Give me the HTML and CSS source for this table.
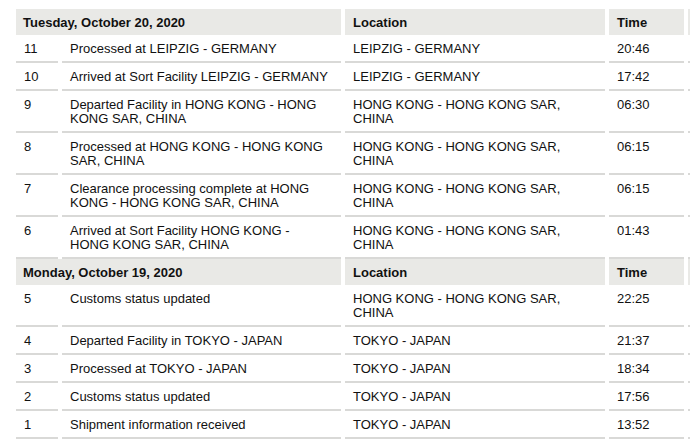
FILE: index.html
```html
<!DOCTYPE html>
<html lang="en">
<head>
<meta charset="utf-8">
<title>Shipment tracking</title>
<link rel="stylesheet" href="styles.css">
</head>
<body>
<div class="frame">
<table class="track">
  <colgroup>
    <col class="c-num"><col class="c-desc"><col class="c-loc"><col class="c-time"><col class="c-extra">
  </colgroup>
  <tbody>
    <tr class="day">
      <th colspan="2">Tuesday, October 20, 2020</th>
      <th>Location</th>
      <th>Time</th>
      <th></th>
    </tr>
    <tr><td>11</td><td>Processed at LEIPZIG - GERMANY</td><td>LEIPZIG - GERMANY</td><td>20:46</td><td></td></tr>
    <tr><td>10</td><td>Arrived at Sort Facility LEIPZIG - GERMANY</td><td>LEIPZIG - GERMANY</td><td>17:42</td><td></td></tr>
    <tr><td>9</td><td>Departed Facility in HONG KONG - HONG KONG SAR, CHINA</td><td>HONG KONG - HONG KONG SAR, CHINA</td><td>06:30</td><td></td></tr>
    <tr><td>8</td><td>Processed at HONG KONG - HONG KONG SAR, CHINA</td><td>HONG KONG - HONG KONG SAR, CHINA</td><td>06:15</td><td></td></tr>
    <tr><td>7</td><td>Clearance processing complete at HONG KONG - HONG KONG SAR, CHINA</td><td>HONG KONG - HONG KONG SAR, CHINA</td><td>06:15</td><td></td></tr>
    <tr><td>6</td><td>Arrived at Sort Facility HONG KONG - HONG KONG SAR, CHINA</td><td>HONG KONG - HONG KONG SAR, CHINA</td><td>01:43</td><td></td></tr>
    <tr class="day">
      <th colspan="2">Monday, October 19, 2020</th>
      <th>Location</th>
      <th>Time</th>
      <th></th>
    </tr>
    <tr><td>5</td><td>Customs status updated</td><td>HONG KONG - HONG KONG SAR, CHINA</td><td>22:25</td><td></td></tr>
    <tr><td>4</td><td>Departed Facility in TOKYO - JAPAN</td><td>TOKYO - JAPAN</td><td>21:37</td><td></td></tr>
    <tr><td>3</td><td>Processed at TOKYO - JAPAN</td><td>TOKYO - JAPAN</td><td>18:34</td><td></td></tr>
    <tr><td>2</td><td>Customs status updated</td><td>TOKYO - JAPAN</td><td>17:56</td><td></td></tr>
    <tr><td>1</td><td>Shipment information received</td><td>TOKYO - JAPAN</td><td>13:52</td><td></td></tr>
  </tbody>
</table>
</div>
</body>
</html>
```

FILE: styles.css
```css
html, body {
  margin: 0;
  padding: 0;
  overflow: hidden;
  background: #ffffff;
}

body {
  font-family: "Liberation Sans", Arial, sans-serif;
  font-size: 13px;
  line-height: 14px;
  color: #111111;
}

.frame {
  width: 678px;
  height: 431px;
  padding: 9px 0 0 12px;
  overflow: hidden;
}

.track {
  border-collapse: separate;
  border-spacing: 4px 0;
  table-layout: fixed;
  width: 780px;
}

.c-num { width: 42px; }
.c-desc { width: 279px; }
.c-loc { width: 260px; }
.c-time { width: 75px; }
.c-extra { width: 100px; }

.track th,
.track td {
  padding: 7px 8px 5px 8px;
  text-align: left;
  vertical-align: top;
}

.track td:nth-child(2) {
  padding-right: 11px;
}

.track th {
  background: #e9e9e6;
  font-weight: bold;
  color: #111111;
}

.track td {
  border-bottom: 2px solid #d9d9d7;
}

.track th:first-child {
  padding-left: 7px;
}
```
